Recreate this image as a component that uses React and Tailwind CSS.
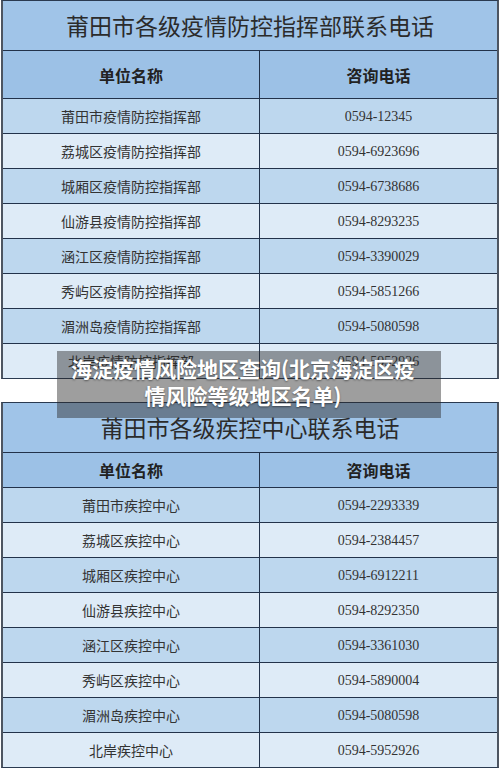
import React from 'react';

const cjk = "font-['Noto_Sans_CJK_SC','Noto_Sans',sans-serif]";
const num = "font-['Liberation_Serif','Noto_Sans_CJK_SC',serif]";

const table1 = [
  ['莆田市疫情防控指挥部', '0594-12345'],
  ['荔城区疫情防控指挥部', '0594-6923696'],
  ['城厢区疫情防控指挥部', '0594-6738686'],
  ['仙游县疫情防控指挥部', '0594-8293235'],
  ['涵江区疫情防控指挥部', '0594-3390029'],
  ['秀屿区疫情防控指挥部', '0594-5851266'],
  ['湄洲岛疫情防控指挥部', '0594-5080598'],
  ['北岸疫情防控指挥部', '0594-5952926'],
];

const table2 = [
  ['莆田市疾控中心', '0594-2293339'],
  ['荔城区疾控中心', '0594-2384457'],
  ['城厢区疾控中心', '0594-6912211'],
  ['仙游县疾控中心', '0594-8292350'],
  ['涵江区疾控中心', '0594-3361030'],
  ['秀屿区疾控中心', '0594-5890004'],
  ['湄洲岛疾控中心', '0594-5080598'],
  ['北岸疾控中心', '0594-5952926'],
];

function ContactTable({ title, rows, headerH }) {
  return (
    <div className="mx-[1px] w-[498px] border-x-2 border-b border-t border-x-[#4d5561] border-y-[#2a3a50]">
      <div className={`h-[49px] flex items-center justify-center bg-[#a0c4e8] text-[23px] text-[#2b2b2b] ${cjk}`}>
        {title}
      </div>
      <div className={`grid grid-cols-[256px_1fr] border-t border-[#22324a] bg-[#9cc1e6] ${headerH}`}>
        <div className={`flex items-center justify-center text-[16px] font-bold text-[#222] ${cjk}`}>单位名称</div>
        <div className={`flex items-center justify-center border-l border-[#22324a] text-[16px] font-bold text-[#222] ${cjk}`}>咨询电话</div>
      </div>
      {rows.map(([name, phone], i) => (
        <div
          key={i}
          className={`grid grid-cols-[256px_1fr] h-[35px] border-t border-[#22324a] ${i % 2 === 0 ? 'bg-[#bdd7ee]' : 'bg-[#deebf7]'}`}
        >
          <div className={`flex items-center justify-center text-[14px] text-[#333] ${cjk}`}>{name}</div>
          <div className={`flex items-center justify-center border-l border-[#22324a] text-[14px] text-[#333] ${num}`}>{phone}</div>
        </div>
      ))}
    </div>
  );
}

export default function App() {
  return (
    <div className="relative w-[500px] h-[769px] overflow-hidden bg-white">
      <ContactTable title="莆田市各级疫情防控指挥部联系电话" rows={table1} headerH="h-[48px]" />
      <div className="h-[23px]" />
      <ContactTable title="莆田市各级疾控中心联系电话" rows={table2} headerH="h-[35px]" />

      <div className="absolute left-[57px] top-[351px] w-[384px] h-[67px] bg-[rgba(40,40,40,0.45)] pl-[8px] pr-[20px] pt-[4px]">
        <p className={`text-center text-white font-bold text-[21px] leading-[27px] [text-shadow:0_1px_2px_rgba(0,0,0,0.45)] ${cjk}`}>
          海淀疫情风险地区查询(北京海淀区疫<br />情风险等级地区名单)
        </p>
      </div>
    </div>
  );
}
